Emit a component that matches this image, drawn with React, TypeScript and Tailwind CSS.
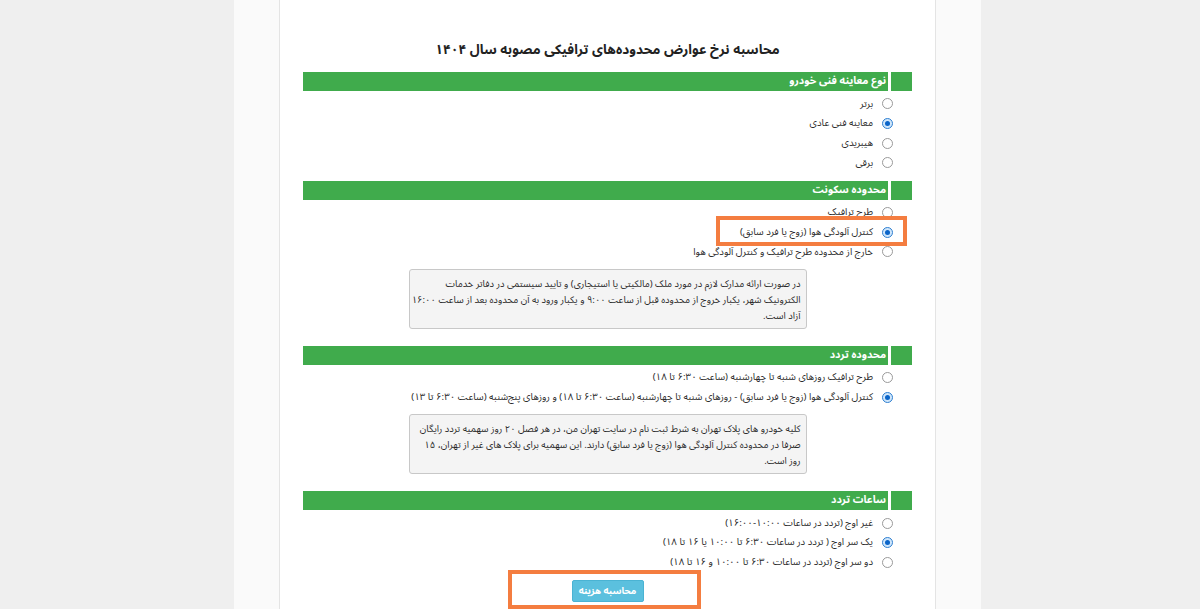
import React from 'react'

type Option = { label: string; checked?: boolean; highlight?: boolean }

const font = "font-['Noto_Sans_Arabic','DejaVu_Sans',sans-serif]"

function Radio({ checked }: { checked?: boolean }) {
  return checked ? (
    <span className="w-[11px] h-[11px] shrink-0 rounded-full border border-[#2f7fd0] bg-[#cfe6fb] flex items-center justify-center">
      <span className="w-[5px] h-[5px] rounded-full bg-[#0a64c8]" />
    </span>
  ) : (
    <span className="w-[11px] h-[11px] shrink-0 rounded-full border border-[#9a9a9a] bg-white" />
  )
}

function SectionHeader({ title }: { title: string }) {
  return (
    <div className="flex h-[19px] gap-[3px]">
      <div className="w-[21px] bg-[#40ab4c]" />
      <div className="flex-1 bg-[#40ab4c] text-white text-[10.5px] font-bold leading-[19px] pr-[2px]">
        {title}
      </div>
    </div>
  )
}

function OptionList({ options }: { options: Option[] }) {
  return (
    <div className="pt-[3px]">
      {options.map((o) => (
        <div key={o.label} className="relative flex items-center h-[19.7px] pr-[19px] gap-[9px]">
          <Radio checked={o.checked} />
          <span className="text-[9.7px] text-[#2b2b2b] whitespace-nowrap">{o.label}</span>
          {o.highlight && (
            <div className="absolute right-[5px] top-[-6px] w-[191px] h-[30px] border-[4px] border-[#f47d40]" />
          )}
        </div>
      ))}
    </div>
  )
}

function Note({ text, pad = 'px-[5px]' }: { text: string; pad?: string }) {
  return (
    <div className={`mx-auto mt-[7px] w-[398px] h-[60px] border border-[#c8c8c8] rounded-[3px] bg-[#f4f4f4] ${pad} pt-[6px] text-[9.5px] leading-[16px] text-[#2b2b2b]`}>
      {text}
    </div>
  )
}

export default function App() {
  return (
    <div className={`min-h-screen bg-[#efefef] ${font}`}>
      <div className="ml-[234px] w-[747px] min-h-screen bg-[#fafafa] flex">
        <div className="ml-[45px] w-[657px] min-h-screen bg-white border-x border-[#e4e4e4] px-[23px]" dir="rtl">
          <h1 className="text-center text-[13.5px] font-bold text-[#222] pt-[40px] h-[72px]">
            محاسبه نرخ عوارض محدوده‌های ترافیکی مصوبه سال ۱۴۰۴
          </h1>

          <SectionHeader title="نوع معاینه فنی خودرو" />
          <OptionList
            options={[
              { label: 'برتر' },
              { label: 'معاینه فنی عادی', checked: true },
              { label: 'هیبریدی' },
              { label: 'برقی' },
            ]}
          />

          <div className="mt-[8px]">
            <SectionHeader title="محدوده سکونت" />
          </div>
          <OptionList
            options={[
              { label: 'طرح ترافیک' },
              { label: 'کنترل آلودگی هوا (زوج یا فرد سابق)', checked: true, highlight: true },
              { label: 'خارج از محدوده طرح ترافیک و کنترل آلودگی هوا' },
            ]}
          />
          <Note
            pad="pr-[5px] pl-[0px]"
            text="در صورت ارائه مدارک لازم در مورد ملک (مالکیتی یا استیجاری) و تایید سیستمی در دفاتر خدمات الکترونیک شهر، یکبار خروج از محدوده قبل از ساعت ۹:۰۰ و یکبار ورود به آن محدوده بعد از ساعت ۱۶:۰۰ آزاد است."
          />

          <div className="mt-[17px]">
            <SectionHeader title="محدوده تردد" />
          </div>
          <OptionList
            options={[
              { label: 'طرح ترافیک روزهای شنبه تا چهارشنبه (ساعت ۶:۳۰ تا ۱۸)' },
              {
                label: 'کنترل آلودگی هوا (زوج یا فرد سابق) - روزهای شنبه تا چهارشنبه (ساعت ۶:۳۰ تا ۱۸) و روزهای پنج‌شنبه (ساعت ۶:۳۰ تا ۱۳)',
                checked: true,
              },
            ]}
          />
          <Note text="کلیه خودرو های پلاک تهران به شرط ثبت نام در سایت تهران من، در هر فصل ۲۰ روز سهمیه تردد رایگان صرفا در محدوده کنترل آلودگی هوا (زوج یا فرد سابق) دارند. این سهمیه برای پلاک های غیر از تهران، ۱۵ روز است." />

          <div className="mt-[17px]">
            <SectionHeader title="ساعات تردد" />
          </div>
          <OptionList
            options={[
              { label: 'غیر اوج (تردد در ساعات ۱۰:۰۰-۱۶:۰۰)' },
              { label: 'یک سر اوج ( تردد در ساعات ۶:۳۰ تا ۱۰:۰۰ یا ۱۶ تا ۱۸)', checked: true },
              { label: 'دو سر اوج (تردد در ساعات ۶:۳۰ تا ۱۰:۰۰ و ۱۶ تا ۱۸)' },
            ]}
          />

          <div className="relative flex justify-center pt-[8px] pb-[20px]">
            <button className="w-[72px] h-[22px] rounded-[2px] bg-[#5bc0de] border border-[#4ab3d3] text-white text-[9.5px] font-bold whitespace-nowrap leading-none">
              محاسبه هزینه
            </button>
            <div className="absolute top-[-2px] left-[205px] w-[193px] h-[39px] border-[4px] border-[#f47d40]" />
          </div>
        </div>
      </div>
    </div>
  )
}
